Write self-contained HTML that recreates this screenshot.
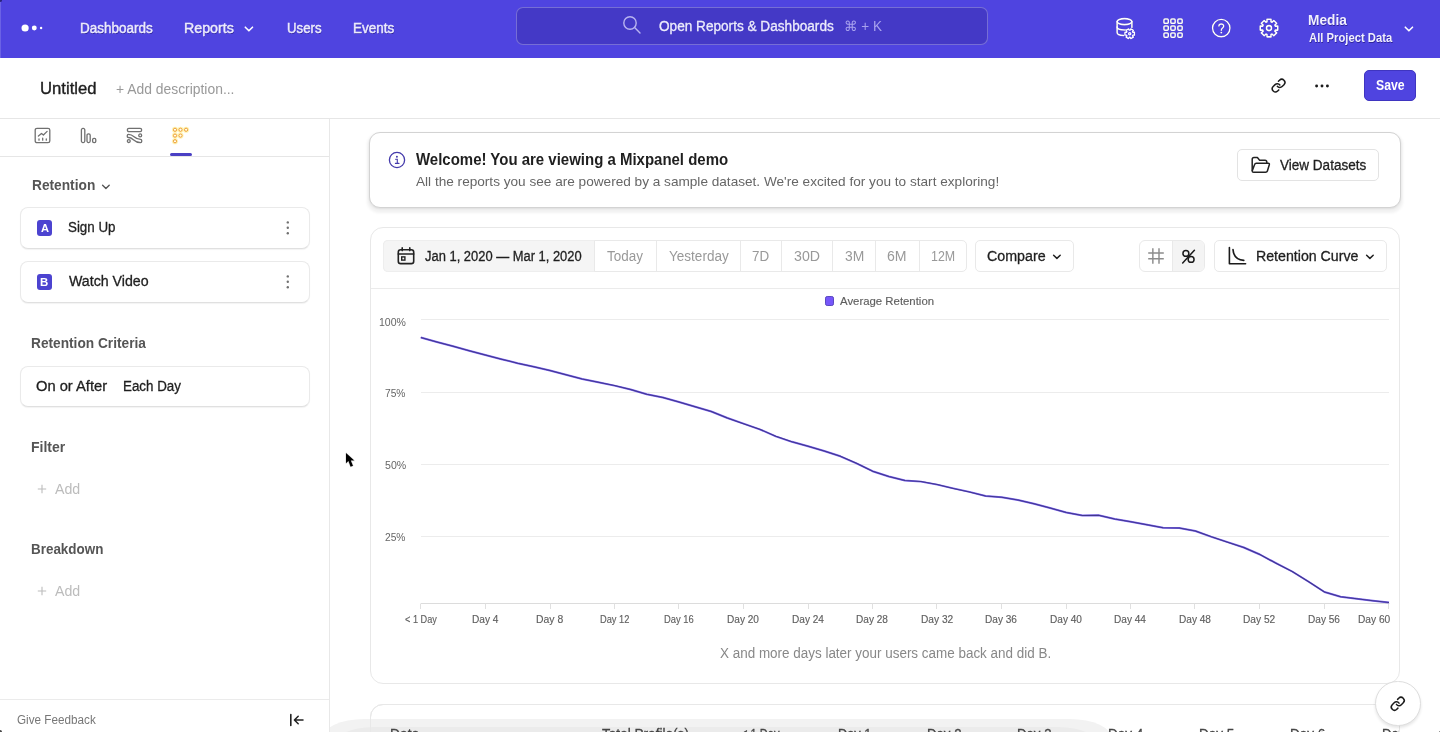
<!DOCTYPE html>
<html lang="en">
<head>
<meta charset="utf-8">
<title>Retention - Mixpanel</title>
<style>
html,body{margin:0;padding:0;background:#fff;}
body{width:1440px;height:732px;overflow:hidden;position:relative;font-family:"Liberation Sans", sans-serif;}
.b{position:absolute;box-sizing:border-box;display:block;}
.t{position:absolute;white-space:pre;line-height:1.117;transform-origin:0 50%;font-family:"Liberation Sans", sans-serif;}
svg{overflow:visible;}
</style>
</head>
<body>
<div class="b" style="left:0px;top:0px;width:1440px;height:58px;background:#4f44e0;"></div>
<div class="b" style="left:0px;top:0px;width:1px;height:58px;background:rgba(255,255,255,0.16);"></div>
<svg class="b" style="left:18px;top:20px;" width="30" height="16" viewBox="0 0 30 16"><circle cx="7.1" cy="8" r="3.6" fill="#fff"/><circle cx="16.3" cy="8" r="2.45" fill="#fff"/><circle cx="23.1" cy="8" r="1.2" fill="#fff"/></svg>
<span class="t" style="left:80.04px;top:20.67px;font-size:14px;font-weight:400;color:#ecebfd;transform:scaleX(0.9643);-webkit-text-stroke:0.45px #ecebfd;text-shadow:0.5px 0.8px 0.6px rgba(20,10,100,0.55);">Dashboards</span>
<span class="t" style="left:183.98px;top:20.67px;font-size:14px;font-weight:400;color:#ecebfd;transform:scaleX(1.0157);-webkit-text-stroke:0.45px #ecebfd;text-shadow:0.5px 0.8px 0.6px rgba(20,10,100,0.55);">Reports</span>
<svg class="b" style="left:244px;top:25px;" width="10" height="8" viewBox="0 0 10 8"><path d="M1.3 2.2 L4.9 5.8 L8.5 2.2" fill="none" stroke="#fff" stroke-width="1.6" stroke-linecap="round" stroke-linejoin="round"/></svg>
<span class="t" style="left:287.29px;top:20.67px;font-size:14px;font-weight:400;color:#ecebfd;transform:scaleX(0.9437);-webkit-text-stroke:0.45px #ecebfd;text-shadow:0.5px 0.8px 0.6px rgba(20,10,100,0.55);">Users</span>
<span class="t" style="left:353.04px;top:20.67px;font-size:14px;font-weight:400;color:#ecebfd;transform:scaleX(0.9639);-webkit-text-stroke:0.45px #ecebfd;text-shadow:0.5px 0.8px 0.6px rgba(20,10,100,0.55);">Events</span>
<div class="b" style="left:515.5px;top:6.5px;width:472.5px;height:38px;background:#4439c6;border:1px solid rgba(255,255,255,0.27);border-radius:7px;"></div>
<svg class="b" style="left:622px;top:15px;" width="20" height="20" viewBox="0 0 20 20"><circle cx="8" cy="8" r="6.2" fill="none" stroke="#b9b4f0" stroke-width="1.4"/><path d="M12.6 12.6 L18 18" stroke="#b9b4f0" stroke-width="1.4" stroke-linecap="round"/></svg>
<span class="t" style="left:658.51px;top:18.57px;font-size:14px;font-weight:400;color:#ecebfb;transform:scaleX(0.9721);-webkit-text-stroke:0.3px #ecebfb;">Open Reports &amp; Dashboards</span>
<span class="t" style="left:844.31px;top:18.57px;font-size:14px;font-weight:400;color:#a8a2ee;transform:scaleX(0.9664);">⌘ + K</span>
<svg class="b" style="left:1114px;top:17px;filter:drop-shadow(0.7px 0.9px 0.3px rgba(25,15,110,0.75));" width="24" height="24" viewBox="0 0 24 24"><ellipse cx="10.5" cy="4.6" rx="7.4" ry="3" fill="none" stroke="#fff" stroke-width="1.55" stroke-linecap="round" stroke-linejoin="round"/><path d="M3.1 4.6 V15.6 C3.1 17.2 6 18.5 9.6 18.6 M17.9 4.6 V10.4" fill="none" stroke="#fff" stroke-width="1.55" stroke-linecap="round" stroke-linejoin="round"/><path d="M3.1 10.1 C3.1 11.8 6.4 13 10.5 13 C11.4 13 12.2 12.95 13 12.8" fill="none" stroke="#fff" stroke-width="1.55" stroke-linecap="round" stroke-linejoin="round"/><circle cx="15.7" cy="16.7" r="5.6" fill="#4f44e0"/><path d="M18.92 15.32 L20.48 15.22 L20.48 18.18 L18.92 18.08 L18.50 18.79 L19.37 20.09 L16.80 21.58 L16.11 20.18 L15.29 20.18 L14.60 21.58 L12.03 20.09 L12.90 18.79 L12.48 18.08 L10.92 18.18 L10.92 15.22 L12.48 15.32 L12.90 14.61 L12.03 13.31 L14.60 11.82 L15.29 13.22 L16.11 13.22 L16.80 11.82 L19.37 13.31 L18.50 14.61 Z" fill="none" stroke="#fff" stroke-width="1.3" stroke-linejoin="round"/><circle cx="15.7" cy="16.7" r="1.1" fill="none" stroke="#fff" stroke-width="1.3"/></svg>
<svg class="b" style="left:1163px;top:18px;filter:drop-shadow(0.7px 0.9px 0.3px rgba(25,15,110,0.75));" width="20" height="20" viewBox="0 0 20 20"><rect x="0.9500000000000002" y="1.0500000000000003" width="4.3" height="4.3" rx="0.9" fill="none" stroke="#fff" stroke-width="1.5"/><rect x="7.85" y="1.0500000000000003" width="4.3" height="4.3" rx="0.9" fill="none" stroke="#fff" stroke-width="1.5"/><rect x="14.85" y="1.0500000000000003" width="4.3" height="4.3" rx="0.9" fill="none" stroke="#fff" stroke-width="1.5"/><rect x="0.9500000000000002" y="7.949999999999999" width="4.3" height="4.3" rx="0.9" fill="none" stroke="#fff" stroke-width="1.5"/><rect x="7.85" y="7.949999999999999" width="4.3" height="4.3" rx="0.9" fill="none" stroke="#fff" stroke-width="1.5"/><rect x="14.85" y="7.949999999999999" width="4.3" height="4.3" rx="0.9" fill="none" stroke="#fff" stroke-width="1.5"/><rect x="0.9500000000000002" y="14.950000000000001" width="4.3" height="4.3" rx="0.9" fill="none" stroke="#fff" stroke-width="1.5"/><rect x="7.85" y="14.950000000000001" width="4.3" height="4.3" rx="0.9" fill="none" stroke="#fff" stroke-width="1.5"/><rect x="14.85" y="14.950000000000001" width="4.3" height="4.3" rx="0.9" fill="none" stroke="#fff" stroke-width="1.5"/></svg>
<svg class="b" style="left:1211px;top:18px;filter:drop-shadow(0.7px 0.9px 0.3px rgba(25,15,110,0.75));" width="20" height="20" viewBox="0 0 20 20"><circle cx="10.25" cy="10.1" r="8.7" fill="none" stroke="#fff" stroke-width="1.4"/><path d="M7.9 8.1 C7.9 5.2 12.7 5.2 12.7 8.1 C12.7 10 10.3 10 10.3 12.2" fill="none" stroke="#fff" stroke-width="1.4" stroke-linecap="round"/><circle cx="10.3" cy="14.6" r="0.95" fill="#fff"/></svg>
<svg class="b" style="left:1259px;top:18px;filter:drop-shadow(0.7px 0.9px 0.3px rgba(25,15,110,0.75));" width="20" height="20" viewBox="0 0 20 20"><path d="M16.30 8.12 L18.77 8.09 L18.77 12.11 L16.30 12.08 L15.85 13.15 L17.63 14.88 L14.78 17.73 L13.05 15.95 L11.98 16.40 L12.01 18.87 L7.99 18.87 L8.02 16.40 L6.95 15.95 L5.22 17.73 L2.37 14.88 L4.15 13.15 L3.70 12.08 L1.23 12.11 L1.23 8.09 L3.70 8.12 L4.15 7.05 L2.37 5.32 L5.22 2.47 L6.95 4.25 L8.02 3.80 L7.99 1.33 L12.01 1.33 L11.98 3.80 L13.05 4.25 L14.78 2.47 L17.63 5.32 L15.85 7.05 Z" fill="none" stroke="#fff" stroke-width="1.55" stroke-linejoin="round"/><circle cx="10" cy="10.1" r="2.5" fill="none" stroke="#fff" stroke-width="1.55"/></svg>
<span class="t" style="left:1308.02px;top:12.62px;font-size:14px;font-weight:700;color:#f1f0fe;transform:scaleX(0.9806);text-shadow:0.5px 0.8px 0.6px rgba(20,10,100,0.55);">Media</span>
<span class="t" style="left:1308.77px;top:31.53px;font-size:12px;font-weight:700;color:#f1f0fe;transform:scaleX(0.9379);text-shadow:0.5px 0.8px 0.6px rgba(20,10,100,0.55);">All Project Data</span>
<svg class="b" style="left:1404px;top:25px;" width="10" height="8" viewBox="0 0 10 8"><path d="M1.3 2.2 L4.9 5.8 L8.5 2.2" fill="none" stroke="#fff" stroke-width="1.6" stroke-linecap="round" stroke-linejoin="round"/></svg>
<div class="b" style="left:0px;top:118px;width:1440px;height:1px;background:#e6e6e6;"></div>
<span class="t" style="left:39.53px;top:79.58px;font-size:15.6px;font-weight:400;color:#1f1f1f;transform:scaleX(1.0706);-webkit-text-stroke:0.35px #1f1f1f;">Untitled</span>
<span class="t" style="left:116.26px;top:81.62px;font-size:14px;font-weight:400;color:#999;transform:scaleX(0.9915);">+ Add description...</span>
<svg class="b" style="left:1271.1px;top:78.1px;" width="15.2" height="15.2" viewBox="0 0 24 24"><g fill="none" stroke="#1b1b1b" stroke-width="2.35" stroke-linecap="round" stroke-linejoin="round"><path d="M10 13a5 5 0 0 0 7.54.54l3-3a5 5 0 0 0-7.07-7.07l-1.72 1.71"/><path d="M14 11a5 5 0 0 0-7.54-.54l-3 3a5 5 0 0 0 7.07 7.07l1.71-1.71"/></g></svg>
<svg class="b" style="left:1314px;top:83px;" width="16" height="6" viewBox="0 0 16 6"><circle cx="2.6" cy="3" r="1.45" fill="#1b1b1b"/><circle cx="8" cy="3" r="1.45" fill="#1b1b1b"/><circle cx="13.4" cy="3" r="1.45" fill="#1b1b1b"/></svg>
<div class="b" style="left:1364px;top:70px;width:52px;height:31px;background:#4f44e0;border-radius:5px;border:1px solid #3f35c0;"></div>
<span class="t" style="left:1375.56px;top:77.52px;font-size:14px;font-weight:700;color:#fff;transform:scaleX(0.8756);">Save</span>
<div class="b" style="left:329px;top:119px;width:1px;height:613px;background:#e8e8e8;"></div>
<div class="b" style="left:0px;top:156px;width:329px;height:1px;background:#e6e6e6;"></div>
<svg class="b" style="left:34px;top:127px;" width="17" height="17" viewBox="0 0 17 17"><rect x="1.2" y="1.3" width="14.6" height="14.4" rx="1.8" fill="none" stroke="#707070" stroke-width="1.3"/><path d="M4.4 9 L7.5 6.5 L9.4 8 L13.1 4.4" fill="none" stroke="#707070" stroke-width="1.3" stroke-linecap="round" stroke-linejoin="round"/><path d="M5 11.9 V13.2 M8.7 11.2 V13.2 M12.3 11.9 V13.2" fill="none" stroke="#707070" stroke-width="1.3" stroke-linecap="round"/></svg>
<svg class="b" style="left:80px;top:127px;" width="17" height="17" viewBox="0 0 17 17"><rect x="1.4" y="1.4" width="3.4" height="14.2" rx="1.5" fill="none" stroke="#707070" stroke-width="1.3"/><rect x="7" y="6.8" width="3.2" height="8.8" rx="1.5" fill="none" stroke="#707070" stroke-width="1.3"/><rect x="12.6" y="11.4" width="3.2" height="4.2" rx="1.4" fill="none" stroke="#707070" stroke-width="1.3"/></svg>
<svg class="b" style="left:126px;top:127px;" width="17" height="17" viewBox="0 0 17 17"><rect x="1.4" y="1.4" width="14.2" height="3.3" rx="1.4" fill="none" stroke="#707070" stroke-width="1.3"/><path d="M2.4 7.3 C8.6 7.3 7.6 12.4 14.6 12.4 Q15.7 12.4 15.7 13.5 V14.5 Q15.7 15.6 14.6 15.6 C6.8 15.6 8 10.5 2.4 10.5 Q1.3 10.5 1.3 9.4 V8.4 Q1.3 7.3 2.4 7.3 Z" fill="none" stroke="#707070" stroke-width="1.3" stroke-linecap="round" stroke-linejoin="round"/><circle cx="14.2" cy="8.4" r="1.45" fill="none" stroke="#707070" stroke-width="1.3"/><circle cx="2.8" cy="14.1" r="1.45" fill="none" stroke="#707070" stroke-width="1.3"/></svg>
<svg class="b" style="left:172px;top:127px;" width="17" height="17" viewBox="0 0 17 17"><circle cx="3" cy="2.75" r="3.1" fill="#ffef9a" opacity="0.7"/><circle cx="8.5" cy="2.75" r="3.1" fill="#ffef9a" opacity="0.7"/><circle cx="14.1" cy="2.75" r="3.1" fill="#ffef9a" opacity="0.7"/><circle cx="3" cy="8.6" r="3.1" fill="#ffef9a" opacity="0.7"/><circle cx="8.5" cy="8.6" r="3.1" fill="#ffef9a" opacity="0.7"/><circle cx="3" cy="14.25" r="3.1" fill="#ffef9a" opacity="0.7"/><circle cx="3" cy="2.75" r="1.6" fill="#fffdf0" stroke="#ee9f35" stroke-width="1"/><circle cx="8.5" cy="2.75" r="1.6" fill="#fffdf0" stroke="#ee9f35" stroke-width="1"/><circle cx="14.1" cy="2.75" r="1.6" fill="#fffdf0" stroke="#ee9f35" stroke-width="1"/><circle cx="3" cy="8.6" r="1.6" fill="#fffdf0" stroke="#ee9f35" stroke-width="1"/><circle cx="8.5" cy="8.6" r="1.6" fill="#fffdf0" stroke="#ee9f35" stroke-width="1"/><circle cx="3" cy="14.25" r="1.6" fill="#fffdf0" stroke="#ee9f35" stroke-width="1"/></svg>
<div class="b" style="left:169.8px;top:153.1px;width:21.8px;height:3px;background:#4a40c4;border-radius:1.5px;"></div>
<span class="t" style="left:31.82px;top:177.67px;font-size:14px;font-weight:700;color:#555;transform:scaleX(0.9801);">Retention</span>
<svg class="b" style="left:101px;top:182.5px;" width="10" height="8" viewBox="0 0 10 8"><path d="M1.6 2.2 L4.9 5.4 L8.2 2.2" fill="none" stroke="#555" stroke-width="1.4" stroke-linecap="round" stroke-linejoin="round"/></svg>
<div class="b" style="left:19.5px;top:207.3px;width:290px;height:41.5px;background:#fff;border:1px solid #eaeaea;border-bottom-color:#e0e0e0;border-radius:8px;box-shadow:0 1px 1px rgba(0,0,0,0.05);"></div>
<div class="b" style="left:36.8px;top:220.0px;width:15.6px;height:15.6px;background:#4c43d0;border-radius:3px;"></div>
<span class="t" style="left:40.74px;top:222.71px;font-size:10.5px;font-weight:700;color:#fff;transform:scaleX(1.0571);">A</span>
<span class="t" style="left:68.32px;top:219.62px;font-size:14px;font-weight:400;color:#1f1f1f;transform:scaleX(0.9538);-webkit-text-stroke:0.3px #1f1f1f;">Sign Up</span>
<svg class="b" style="left:285px;top:220.3px;" width="6" height="16" viewBox="0 0 6 16"><circle cx="2.8" cy="2.4" r="1.2" fill="#707070"/><circle cx="2.8" cy="7.8" r="1.2" fill="#707070"/><circle cx="2.8" cy="13.2" r="1.2" fill="#707070"/></svg>
<div class="b" style="left:19.5px;top:261.4px;width:290px;height:41.5px;background:#fff;border:1px solid #eaeaea;border-bottom-color:#e0e0e0;border-radius:8px;box-shadow:0 1px 1px rgba(0,0,0,0.05);"></div>
<div class="b" style="left:36.8px;top:274.09999999999997px;width:15.6px;height:15.6px;background:#4c43d0;border-radius:3px;"></div>
<span class="t" style="left:40.48px;top:276.56px;font-size:10.5px;font-weight:700;color:#fff;transform:scaleX(1.0880);">B</span>
<span class="t" style="left:68.80px;top:273.72px;font-size:14px;font-weight:400;color:#1f1f1f;transform:scaleX(1.0134);-webkit-text-stroke:0.3px #1f1f1f;">Watch Video</span>
<svg class="b" style="left:285px;top:274.4px;" width="6" height="16" viewBox="0 0 6 16"><circle cx="2.8" cy="2.4" r="1.2" fill="#707070"/><circle cx="2.8" cy="7.8" r="1.2" fill="#707070"/><circle cx="2.8" cy="13.2" r="1.2" fill="#707070"/></svg>
<span class="t" style="left:31.02px;top:335.52px;font-size:14px;font-weight:700;color:#555;transform:scaleX(0.9785);">Retention Criteria</span>
<div class="b" style="left:19.5px;top:365.5px;width:290px;height:41.5px;background:#fff;border:1px solid #eaeaea;border-bottom-color:#e0e0e0;border-radius:8px;box-shadow:0 1px 1px rgba(0,0,0,0.05);"></div>
<span class="t" style="left:36.28px;top:378.52px;font-size:14px;font-weight:400;color:#1f1f1f;transform:scaleX(1.0498);-webkit-text-stroke:0.3px #1f1f1f;">On or After</span>
<span class="t" style="left:122.85px;top:378.52px;font-size:14px;font-weight:400;color:#1f1f1f;transform:scaleX(0.9540);-webkit-text-stroke:0.3px #1f1f1f;">Each Day</span>
<span class="t" style="left:31.00px;top:439.52px;font-size:14px;font-weight:700;color:#555;transform:scaleX(1.0020);">Filter</span>
<svg class="b" style="left:36.5px;top:484.2px;" width="10" height="10" viewBox="0 0 10 10"><path d="M5 0.8 V9.2 M0.8 5 H9.2" stroke="#bcbcbc" stroke-width="1.1" fill="none"/></svg>
<span class="t" style="left:55.00px;top:481.67px;font-size:14px;font-weight:400;color:#bcbcbc;transform:scaleX(1.0125);">Add</span>
<span class="t" style="left:31.04px;top:541.52px;font-size:14px;font-weight:700;color:#555;transform:scaleX(0.9592);">Breakdown</span>
<svg class="b" style="left:36.5px;top:586.2px;" width="10" height="10" viewBox="0 0 10 10"><path d="M5 0.8 V9.2 M0.8 5 H9.2" stroke="#bcbcbc" stroke-width="1.1" fill="none"/></svg>
<span class="t" style="left:55.00px;top:583.67px;font-size:14px;font-weight:400;color:#bcbcbc;transform:scaleX(1.0125);">Add</span>
<div class="b" style="left:0px;top:699px;width:329px;height:1px;background:#ebebeb;"></div>
<span class="t" style="left:17.31px;top:713.63px;font-size:12px;font-weight:400;color:#777;transform:scaleX(0.9757);">Give Feedback</span>
<svg class="b" style="left:289px;top:713px;" width="16" height="14" viewBox="0 0 16 14"><path d="M1.8 1.6 V12.4" stroke="#222" stroke-width="1.6" stroke-linecap="round" fill="none"/><path d="M14 7 H5.6 M9.2 3.2 L5.4 7 L9.2 10.8" stroke="#222" stroke-width="1.5" stroke-linecap="round" stroke-linejoin="round" fill="none"/></svg>
<div class="b" style="left:369.2px;top:132px;width:1031.8px;height:75.5px;background:#fff;border:1px solid #d3d3d3;border-radius:11px;box-shadow:0 3px 3px 1.5px rgba(0,0,0,0.055), 0 1px 2px rgba(0,0,0,0.08);"></div>
<svg class="b" style="left:388px;top:151px;" width="18" height="18" viewBox="0 0 18 18"><circle cx="9" cy="9" r="7.6" fill="none" stroke="#443aab" stroke-width="1.3"/><circle cx="8.9" cy="5.7" r="0.95" fill="#443aab"/><path d="M7.6 8.2 H9.3 V12.3 M7.4 12.4 H11" fill="none" stroke="#443aab" stroke-width="1.1" stroke-linecap="round"/></svg>
<span class="t" style="left:416.30px;top:150.60px;font-size:16px;font-weight:700;color:#1f1f1f;transform:scaleX(0.9361);">Welcome! You are viewing a Mixpanel demo</span>
<span class="t" style="left:416.30px;top:174.61px;font-size:13.3px;font-weight:400;color:#666;transform:scaleX(1.0233);">All the reports you see are powered by a sample dataset. We&#x27;re excited for you to start exploring!</span>
<div class="b" style="left:1237px;top:149px;width:142px;height:32px;background:#fff;border:1px solid #e3e3e3;border-radius:5px;"></div>
<svg class="b" style="left:1250px;top:156px;" width="21" height="18" viewBox="0 0 21 18"><path d="M2.2 14.6 V3.4 Q2.2 1.6 4 1.6 H7.4 L9.6 4.2 H15 Q16.8 4.2 16.8 6 V7.2" fill="none" stroke="#222" stroke-width="1.5" stroke-linejoin="round" stroke-linecap="round"/><path d="M2.2 14.9 L4.6 8.4 Q5 7.2 6.3 7.2 H18.2 Q19.8 7.2 19.3 8.7 L17.4 15 Q17 16.3 15.6 16.3 H3.6 Q2.2 16.3 2.2 14.9 Z" fill="none" stroke="#222" stroke-width="1.5" stroke-linejoin="round"/></svg>
<span class="t" style="left:1279.80px;top:157.52px;font-size:14px;font-weight:400;color:#1f1f1f;transform:scaleX(0.9663);-webkit-text-stroke:0.3px #1f1f1f;">View Datasets</span>
<div class="b" style="left:370px;top:227px;width:1030px;height:456.5px;background:#fff;border:1px solid #e8e8e8;border-radius:13px;"></div>
<div class="b" style="left:371px;top:288px;width:1028px;height:1px;background:#ebebeb;"></div>
<div class="b" style="left:383px;top:240.3px;width:584px;height:31.6px;background:#fff;border:1px solid #e9e9e9;border-radius:5px;"></div>
<div class="b" style="left:383px;top:240.3px;width:212px;height:31.6px;background:#f5f5f5;border:1px solid #eeeeee;border-right-color:#e9e9e9;border-radius:5px 0 0 5px;"></div>
<div class="b" style="left:655.8px;top:241px;width:1px;height:30px;background:#e9e9e9;"></div>
<div class="b" style="left:740.3px;top:241px;width:1px;height:30px;background:#e9e9e9;"></div>
<div class="b" style="left:781.3px;top:241px;width:1px;height:30px;background:#e9e9e9;"></div>
<div class="b" style="left:831.8px;top:241px;width:1px;height:30px;background:#e9e9e9;"></div>
<div class="b" style="left:875.3px;top:241px;width:1px;height:30px;background:#e9e9e9;"></div>
<div class="b" style="left:919px;top:241px;width:1px;height:30px;background:#e9e9e9;"></div>
<svg class="b" style="left:397px;top:247px;" width="18" height="18" viewBox="0 0 18 18"><rect x="1.3" y="2.7" width="15.4" height="13.9" rx="2.4" fill="none" stroke="#222" stroke-width="1.6"/><path d="M1.3 7 H16.7 M5.2 0.9 V3.6 M12.8 0.9 V3.6" stroke="#222" stroke-width="1.6" fill="none" stroke-linecap="round"/><rect x="4.7" y="9.9" width="3.2" height="3.2" fill="none" stroke="#222" stroke-width="1.4"/></svg>
<span class="t" style="left:424.80px;top:248.52px;font-size:14px;font-weight:400;color:#1f1f1f;transform:scaleX(0.9235);-webkit-text-stroke:0.3px #1f1f1f;">Jan 1, 2020 — Mar 1, 2020</span>
<span class="t" style="left:607.26px;top:248.52px;font-size:14px;font-weight:400;color:#999;transform:scaleX(0.9622);">Today</span>
<span class="t" style="left:668.52px;top:248.52px;font-size:14px;font-weight:400;color:#999;transform:scaleX(0.9672);">Yesterday</span>
<span class="t" style="left:752.28px;top:248.52px;font-size:14px;font-weight:400;color:#999;transform:scaleX(0.9576);">7D</span>
<span class="t" style="left:794.09px;top:248.52px;font-size:14px;font-weight:400;color:#999;transform:scaleX(1.0122);">30D</span>
<span class="t" style="left:844.50px;top:248.52px;font-size:14px;font-weight:400;color:#999;transform:scaleX(0.9915);">3M</span>
<span class="t" style="left:887.45px;top:248.52px;font-size:14px;font-weight:400;color:#999;transform:scaleX(1.0057);">6M</span>
<span class="t" style="left:931.11px;top:248.52px;font-size:14px;font-weight:400;color:#999;transform:scaleX(0.8880);">12M</span>
<div class="b" style="left:975px;top:240.3px;width:99px;height:31.6px;background:#fff;border:1px solid #e9e9e9;border-radius:5px;"></div>
<span class="t" style="left:987.49px;top:248.52px;font-size:14px;font-weight:400;color:#1f1f1f;transform:scaleX(1.0177);-webkit-text-stroke:0.3px #1f1f1f;">Compare</span>
<svg class="b" style="left:1052px;top:253px;" width="10" height="8" viewBox="0 0 10 8"><path d="M1.6 2.2 L4.9 5.4 L8.2 2.2" fill="none" stroke="#222" stroke-width="1.5" stroke-linecap="round" stroke-linejoin="round"/></svg>
<div class="b" style="left:1138.6px;top:240.3px;width:66.6px;height:31.6px;background:#fff;border:1px solid #e9e9e9;border-radius:6px;"></div>
<div class="b" style="left:1172px;top:241.3px;width:32.2px;height:29.6px;background:#f4f4f4;border-left:1px solid #e9e9e9;border-radius:0 5px 5px 0;"></div>
<svg class="b" style="left:1147.5px;top:248px;" width="16" height="16" viewBox="0 0 16 16"><path d="M4.85 0.2 V15.8 M11 0.2 V15.8 M0.2 5 H15.8 M0.2 10.8 H15.8" stroke="#8c8c8c" stroke-width="1.45" fill="none"/></svg>
<svg class="b" style="left:1181px;top:248.5px;" width="15" height="15" viewBox="0 0 15 15"><circle cx="4.9" cy="4.4" r="2.95" fill="none" stroke="#1b1b1b" stroke-width="1.5"/><circle cx="10.1" cy="10.4" r="2.95" fill="none" stroke="#1b1b1b" stroke-width="1.5"/><path d="M1.7 14 L13.4 1.2" stroke="#1b1b1b" stroke-width="1.5" stroke-linecap="round" fill="none"/></svg>
<div class="b" style="left:1213.5px;top:240.3px;width:173.5px;height:31.6px;background:#fff;border:1px solid #e9e9e9;border-radius:5px;"></div>
<svg class="b" style="left:1228px;top:247px;" width="19" height="18" viewBox="0 0 19 18"><path d="M1.4 0.6 V16.8 H17.6" fill="none" stroke="#1b1b1b" stroke-width="1.6" stroke-linecap="round" stroke-linejoin="round"/><path d="M5 2.6 C5.4 9 9 12.8 15.8 13.4" fill="none" stroke="#1b1b1b" stroke-width="1.6" stroke-linecap="round"/></svg>
<span class="t" style="left:1256.29px;top:248.52px;font-size:14px;font-weight:400;color:#1f1f1f;transform:scaleX(1.0125);-webkit-text-stroke:0.3px #1f1f1f;">Retention Curve</span>
<svg class="b" style="left:1365px;top:253px;" width="10" height="8" viewBox="0 0 10 8"><path d="M1.6 2.2 L4.9 5.4 L8.2 2.2" fill="none" stroke="#222" stroke-width="1.5" stroke-linecap="round" stroke-linejoin="round"/></svg>
<div class="b" style="left:824.8px;top:296.2px;width:9.6px;height:9.6px;background:#7656fa;border:1px solid #5a49c0;border-radius:2.2px;"></div>
<span class="t" style="left:839.70px;top:294.66px;font-size:11.5px;font-weight:400;color:#5f5f5f;transform:scaleX(0.9894);-webkit-text-stroke:0.15px #5f5f5f;">Average Retention</span>
<svg class="b" style="left:0px;top:0px;" width="1440" height="732" viewBox="0 0 1440 732"><path d="M421 319.5 H1389" stroke="#ececec" stroke-width="1" fill="none"/><path d="M421 392.5 H1389" stroke="#ececec" stroke-width="1" fill="none"/><path d="M421 464.5 H1389" stroke="#ececec" stroke-width="1" fill="none"/><path d="M421 536.5 H1389" stroke="#ececec" stroke-width="1" fill="none"/><path d="M421 603.5 H1389.5" stroke="#dcdcdc" stroke-width="1" fill="none"/><path d="M420.5 603.5 V609" stroke="#e0e0e0" stroke-width="1" fill="none"/><path d="M485.5 603.5 V609" stroke="#e0e0e0" stroke-width="1" fill="none"/><path d="M550.5 603.5 V609" stroke="#e0e0e0" stroke-width="1" fill="none"/><path d="M614.5 603.5 V609" stroke="#e0e0e0" stroke-width="1" fill="none"/><path d="M678.5 603.5 V609" stroke="#e0e0e0" stroke-width="1" fill="none"/><path d="M743.5 603.5 V609" stroke="#e0e0e0" stroke-width="1" fill="none"/><path d="M808.5 603.5 V609" stroke="#e0e0e0" stroke-width="1" fill="none"/><path d="M872.5 603.5 V609" stroke="#e0e0e0" stroke-width="1" fill="none"/><path d="M936.5 603.5 V609" stroke="#e0e0e0" stroke-width="1" fill="none"/><path d="M1001.5 603.5 V609" stroke="#e0e0e0" stroke-width="1" fill="none"/><path d="M1066.5 603.5 V609" stroke="#e0e0e0" stroke-width="1" fill="none"/><path d="M1130.5 603.5 V609" stroke="#e0e0e0" stroke-width="1" fill="none"/><path d="M1194.5 603.5 V609" stroke="#e0e0e0" stroke-width="1" fill="none"/><path d="M1259.5 603.5 V609" stroke="#e0e0e0" stroke-width="1" fill="none"/><path d="M1324.5 603.5 V609" stroke="#e0e0e0" stroke-width="1" fill="none"/><path d="M1388.5 603.5 V609" stroke="#e0e0e0" stroke-width="1" fill="none"/><polyline points="420.8,337.5 436.9,342.0 453.1,346.3 469.2,350.7 485.3,355.0 501.5,359.2 517.6,363.2 533.8,366.8 549.9,370.5 566.0,374.8 582.2,379.0 598.3,382.3 614.4,385.6 630.6,389.5 646.7,394.3 662.9,397.5 679.0,402.0 695.1,406.8 711.3,411.5 727.4,418.0 743.5,423.7 759.7,429.3 775.8,436.3 791.9,441.8 808.1,446.3 824.2,451.0 840.4,456.3 856.5,463.3 872.6,471.2 888.8,476.5 904.9,480.5 921.0,481.6 937.2,484.6 953.3,488.4 969.4,491.9 985.6,496.0 1001.7,497.3 1017.9,500.0 1034.0,503.8 1050.1,508.0 1066.3,512.5 1082.4,515.5 1098.5,515.2 1114.7,519.0 1130.8,521.8 1147.0,524.8 1163.1,527.8 1179.2,528.0 1195.4,531.0 1211.5,536.8 1227.6,542.2 1243.8,547.5 1259.9,554.5 1276.0,563.2 1292.2,571.5 1308.3,581.5 1324.5,592.0 1340.6,596.8 1356.7,598.8 1372.9,600.8 1389.0,602.5" fill="none" stroke="#7a62f0" stroke-width="1.95" stroke-linejoin="round" stroke-linecap="butt"/><polyline points="420.8,337.5 436.9,342.0 453.1,346.3 469.2,350.7 485.3,355.0 501.5,359.2 517.6,363.2 533.8,366.8 549.9,370.5 566.0,374.8 582.2,379.0 598.3,382.3 614.4,385.6 630.6,389.5 646.7,394.3 662.9,397.5 679.0,402.0 695.1,406.8 711.3,411.5 727.4,418.0 743.5,423.7 759.7,429.3 775.8,436.3 791.9,441.8 808.1,446.3 824.2,451.0 840.4,456.3 856.5,463.3 872.6,471.2 888.8,476.5 904.9,480.5 921.0,481.6 937.2,484.6 953.3,488.4 969.4,491.9 985.6,496.0 1001.7,497.3 1017.9,500.0 1034.0,503.8 1050.1,508.0 1066.3,512.5 1082.4,515.5 1098.5,515.2 1114.7,519.0 1130.8,521.8 1147.0,524.8 1163.1,527.8 1179.2,528.0 1195.4,531.0 1211.5,536.8 1227.6,542.2 1243.8,547.5 1259.9,554.5 1276.0,563.2 1292.2,571.5 1308.3,581.5 1324.5,592.0 1340.6,596.8 1356.7,598.8 1372.9,600.8 1389.0,602.5" fill="none" stroke="#40388c" stroke-width="1.05" stroke-linejoin="round" stroke-linecap="butt"/></svg>
<span class="t" style="left:379.05px;top:316.61px;font-size:10.5px;font-weight:400;color:#666;transform:scaleX(1.0020);">100%</span>
<span class="t" style="left:385.41px;top:387.51px;font-size:10.5px;font-weight:400;color:#666;transform:scaleX(0.9728);">75%</span>
<span class="t" style="left:384.70px;top:459.51px;font-size:10.5px;font-weight:400;color:#666;transform:scaleX(1.0074);">50%</span>
<span class="t" style="left:385.41px;top:531.51px;font-size:10.5px;font-weight:400;color:#666;transform:scaleX(0.9728);">25%</span>
<span class="t" style="left:405.06px;top:613.71px;font-size:10.5px;font-weight:400;color:#606060;transform:scaleX(0.8722);-webkit-text-stroke:0.15px #606060;">&lt; 1 Day</span>
<span class="t" style="left:472.18px;top:613.71px;font-size:10.5px;font-weight:400;color:#606060;transform:scaleX(0.9660);-webkit-text-stroke:0.15px #606060;">Day 4</span>
<span class="t" style="left:536.46px;top:613.71px;font-size:10.5px;font-weight:400;color:#606060;transform:scaleX(0.9905);-webkit-text-stroke:0.15px #606060;">Day 8</span>
<span class="t" style="left:599.89px;top:613.71px;font-size:10.5px;font-weight:400;color:#606060;transform:scaleX(0.8844);-webkit-text-stroke:0.15px #606060;">Day 12</span>
<span class="t" style="left:664.13px;top:613.71px;font-size:10.5px;font-weight:400;color:#606060;transform:scaleX(0.8930);-webkit-text-stroke:0.15px #606060;">Day 16</span>
<span class="t" style="left:727.48px;top:613.71px;font-size:10.5px;font-weight:400;color:#606060;transform:scaleX(0.9612);-webkit-text-stroke:0.15px #606060;">Day 20</span>
<span class="t" style="left:791.98px;top:613.71px;font-size:10.5px;font-weight:400;color:#606060;transform:scaleX(0.9612);-webkit-text-stroke:0.15px #606060;">Day 24</span>
<span class="t" style="left:856.48px;top:613.71px;font-size:10.5px;font-weight:400;color:#606060;transform:scaleX(0.9612);-webkit-text-stroke:0.15px #606060;">Day 28</span>
<span class="t" style="left:920.97px;top:613.71px;font-size:10.5px;font-weight:400;color:#606060;transform:scaleX(0.9688);-webkit-text-stroke:0.15px #606060;">Day 32</span>
<span class="t" style="left:985.48px;top:613.71px;font-size:10.5px;font-weight:400;color:#606060;transform:scaleX(0.9612);-webkit-text-stroke:0.15px #606060;">Day 36</span>
<span class="t" style="left:1049.98px;top:613.71px;font-size:10.5px;font-weight:400;color:#606060;transform:scaleX(0.9612);-webkit-text-stroke:0.15px #606060;">Day 40</span>
<span class="t" style="left:1114.48px;top:613.71px;font-size:10.5px;font-weight:400;color:#606060;transform:scaleX(0.9612);-webkit-text-stroke:0.15px #606060;">Day 44</span>
<span class="t" style="left:1178.98px;top:613.71px;font-size:10.5px;font-weight:400;color:#606060;transform:scaleX(0.9612);-webkit-text-stroke:0.15px #606060;">Day 48</span>
<span class="t" style="left:1243.47px;top:613.71px;font-size:10.5px;font-weight:400;color:#606060;transform:scaleX(0.9688);-webkit-text-stroke:0.15px #606060;">Day 52</span>
<span class="t" style="left:1307.98px;top:613.71px;font-size:10.5px;font-weight:400;color:#606060;transform:scaleX(0.9612);-webkit-text-stroke:0.15px #606060;">Day 56</span>
<span class="t" style="left:1358.17px;top:613.71px;font-size:10.5px;font-weight:400;color:#606060;transform:scaleX(0.9705);-webkit-text-stroke:0.15px #606060;">Day 60</span>
<span class="t" style="left:720.02px;top:645.62px;font-size:14px;font-weight:400;color:#888;transform:scaleX(0.9606);">X and more days later your users came back and did B.</span>
<div class="b" style="left:330px;top:700px;width:1110px;height:32px;overflow:hidden;"><div class="b" style="left:-8px;top:18.8px;width:790px;height:60px;background:#f2f2f2;border-radius:42px/20px;"></div><div class="b" style="left:2px;top:27px;width:768px;height:60px;background:#ebebeb;border-radius:42px/20px;"></div></div>
<div class="b" style="left:370px;top:703.5px;width:1030px;height:60px;background:transparent;border:1px solid #e8e8e8;border-radius:13px;"></div>
<span class="t" style="left:390.41px;top:726.67px;font-size:14px;font-weight:400;color:#444;transform:scaleX(0.9857);-webkit-text-stroke:0.3px #444;">Date</span>
<span class="t" style="left:601.76px;top:726.67px;font-size:14px;font-weight:400;color:#444;transform:scaleX(0.9718);-webkit-text-stroke:0.3px #444;">Total Profile(s)</span>
<span class="t" style="left:740.60px;top:726.67px;font-size:14px;font-weight:400;color:#444;transform:scaleX(0.7917);-webkit-text-stroke:0.3px #444;">&lt; 1 Day</span>
<span class="t" style="left:838.09px;top:726.67px;font-size:14px;font-weight:400;color:#444;transform:scaleX(0.9143);-webkit-text-stroke:0.3px #444;">Day 1</span>
<span class="t" style="left:927.06px;top:726.67px;font-size:14px;font-weight:400;color:#444;transform:scaleX(0.9429);-webkit-text-stroke:0.3px #444;">Day 2</span>
<span class="t" style="left:1017.06px;top:726.67px;font-size:14px;font-weight:400;color:#444;transform:scaleX(0.9429);-webkit-text-stroke:0.3px #444;">Day 3</span>
<span class="t" style="left:1108.04px;top:726.67px;font-size:14px;font-weight:400;color:#444;transform:scaleX(0.9645);-webkit-text-stroke:0.3px #444;">Day 4</span>
<span class="t" style="left:1199.04px;top:726.67px;font-size:14px;font-weight:400;color:#444;transform:scaleX(0.9645);-webkit-text-stroke:0.3px #444;">Day 5</span>
<span class="t" style="left:1290.04px;top:726.67px;font-size:14px;font-weight:400;color:#444;transform:scaleX(0.9645);-webkit-text-stroke:0.3px #444;">Day 6</span>
<span class="t" style="left:1382.46px;top:726.67px;font-size:14px;font-weight:400;color:#444;transform:scaleX(0.9429);-webkit-text-stroke:0.3px #444;">Day 7</span>
<div class="b" style="left:1399.5px;top:705px;width:41px;height:27px;background:#fff;"></div>
<div class="b" style="left:370px;top:703.5px;width:1030px;height:60px;background:transparent;border:1px solid #e8e8e8;border-radius:13px;"></div>
<div class="b" style="left:1375.2px;top:680.9px;width:45.6px;height:45.6px;background:#fff;border:1px solid #dedede;border-radius:50%;box-shadow:0 2px 3px rgba(0,0,0,0.10);"></div>
<svg class="b" style="left:1390.25px;top:696.2px;" width="15.5" height="15.5" viewBox="0 0 24 24"><g fill="none" stroke="#1b1b1b" stroke-width="2.35" stroke-linecap="round" stroke-linejoin="round"><path d="M10 13a5 5 0 0 0 7.54.54l3-3a5 5 0 0 0-7.07-7.07l-1.72 1.71"/><path d="M14 11a5 5 0 0 0-7.54-.54l-3 3a5 5 0 0 0 7.07 7.07l1.71-1.71"/></g></svg>
<svg class="b" style="left:344px;top:451px;filter:drop-shadow(0 0.6px 0.6px rgba(0,0,0,0.35));" width="13" height="18" viewBox="0 0 13 18"><path d="M2 1.9 L2 12.3 L4.4 10.1 L6.6 15.7 L9 14.7 L6.8 9.6 L10.3 9.6 Z" fill="#000" stroke="#fff" stroke-width="0.9" stroke-linejoin="round" paint-order="stroke"/></svg>
<div class="b" style="left:0px;top:0px;width:2px;height:1.5px;background:#2b2580;border-radius:0 0 100% 0;"></div>
<div class="b" style="left:0px;top:730.3px;width:1.8px;height:1.7px;background:#4a4a4a;border-radius:0 100% 0 0;"></div>
<div class="b" style="left:1438.6px;top:730.6px;width:1.4px;height:1.4px;background:#777;border-radius:100% 0 0 0;"></div>
</body>
</html>
